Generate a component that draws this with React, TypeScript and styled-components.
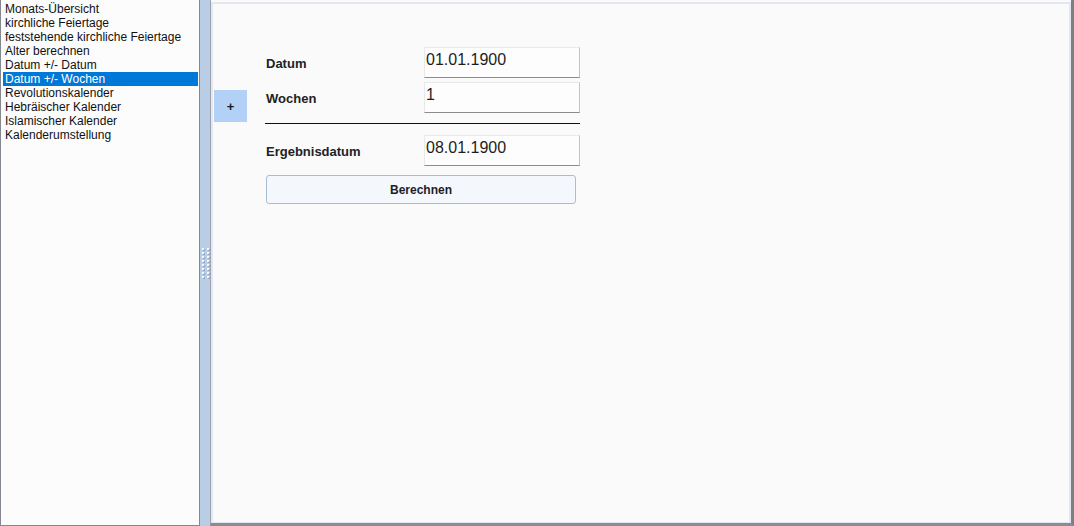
import React, { useState } from 'react';
import styled, { createGlobalStyle } from 'styled-components';

const menuItems = [
  'Monats-Übersicht',
  'kirchliche Feiertage',
  'feststehende kirchliche Feiertage',
  'Alter berechnen',
  'Datum +/- Datum',
  'Datum +/- Wochen',
  'Revolutionskalender',
  'Hebräischer Kalender',
  'Islamischer Kalender',
  'Kalenderumstellung',
];

const GlobalStyle = createGlobalStyle`
  html, body {
    margin: 0;
    padding: 0;
    background: #fafafa;
  }
  body {
    font-family: 'Liberation Sans', Arial, sans-serif;
  }
`;

const Shell = styled.div`
  display: flex;
  width: 1074px;
  height: 526px;
  box-sizing: border-box;
`;

const Sidebar = styled.ul`
  width: 200px;
  flex: 0 0 200px;
  margin: 0;
  padding: 2px 1px 0 2px;
  box-sizing: border-box;
  list-style: none;
  background: #fcfcfc;
  border-left: 1px solid #828790;
  border-right: 1px solid #828790;
  border-bottom: 1px solid #828790;
`;

const MenuItem = styled.li<{ $active?: boolean }>`
  height: 14px;
  line-height: 14px;
  padding-left: 2px;
  font-size: 12px;
  color: ${(p) => (p.$active ? '#ffffff' : '#111111')};
  background: ${(p) => (p.$active ? '#0078d7' : 'transparent')};
  white-space: nowrap;
  cursor: default;
`;

const Splitter = styled.div`
  flex: 0 0 10px;
  display: flex;
  align-items: center;
  justify-content: center;
  background: #b9cde4;
`;

const Grip = styled.div`
  display: grid;
  grid-template-columns: repeat(2, 2px);
  grid-auto-rows: 2px;
  column-gap: 3px;
  row-gap: 2px;

  span {
    background: #f4f7fb;
    box-shadow: 1px 1px 0 #8fa6c4;
  }
`;

const Workspace = styled.main`
  flex: 1;
  display: flex;
  box-sizing: border-box;
  border-left: 1px solid #9ea3ab;
  border-right: 3px solid #7d7f84;
  border-bottom: 3px solid #8a8c92;
  padding-top: 2px;
  background: #fafafa;
`;

const Inner = styled.div`
  flex: 1;
  display: flex;
  align-items: flex-start;
  border: 2px solid #e3e7f3;
  border-bottom-width: 1px;
  background: #fafafa;
`;

const ToggleButton = styled.button`
  margin-top: 86px;
  margin-left: 1px;
  width: 33px;
  height: 32px;
  padding: 0;
  border: none;
  background: #b3d1f7;
  color: #1a1a1a;
  font-family: 'Liberation Sans', Arial, sans-serif;
  font-size: 13px;
  font-weight: bold;
  cursor: pointer;
`;

const Form = styled.div`
  margin-top: 43px;
  margin-left: 19px;
  width: 314px;
  display: grid;
  grid-template-columns: 158px 156px;
  row-gap: 4px;
  align-items: center;
`;

const Label = styled.label`
  font-size: 13px;
  font-weight: bold;
  color: #222222;
  padding-top: 1px;
`;

const Field = styled.input`
  box-sizing: border-box;
  width: 156px;
  height: 31px;
  padding: 3px 1px 8px;
  font-family: 'Liberation Sans', Arial, sans-serif;
  font-size: 16px;
  line-height: 18px;
  color: #1e1e1e;
  background: #fdfdfd;
  border-top: 1px solid #e9e9e9;
  border-left: 1px solid #e9e9e9;
  border-right: 1px solid #c4c4c4;
  border-bottom: 1px solid #8c8c8c;
  outline: none;
  align-self: start;
`;

const Divider = styled.hr`
  grid-column: 1 / -1;
  margin: 6px 0 7px -1px;
  border: none;
  border-top: 1px solid #111111;
  width: 315px;
`;

const SubmitButton = styled.button`
  grid-column: 1 / -1;
  margin-top: 5px;
  width: 310px;
  height: 29px;
  border: 1px solid #a7bcd6;
  border-radius: 3px;
  background: #f4f7fb;
  font-family: 'Liberation Sans', Arial, sans-serif;
  font-size: 12px;
  font-weight: bold;
  color: #1e1e2a;
  cursor: pointer;
`;

const App = () => {
  const [selected, setSelected] = useState(5);
  const [date, setDate] = useState('01.01.1900');
  const [weeks, setWeeks] = useState('1');
  const [result, setResult] = useState('08.01.1900');

  const calculate = () => {
    const [d, m, y] = date.split('.').map(Number);
    const start = new Date(y, m - 1, d);
    start.setDate(start.getDate() + 7 * (Number(weeks) || 0));
    const pad = (n: number) => String(n).padStart(2, '0');
    setResult(`${pad(start.getDate())}.${pad(start.getMonth() + 1)}.${start.getFullYear()}`);
  };

  return (
    <Shell>
      <GlobalStyle />
      <Sidebar>
        {menuItems.map((item, i) => (
          <MenuItem key={item} $active={i === selected} onClick={() => setSelected(i)}>
            {item}
          </MenuItem>
        ))}
      </Sidebar>
      <Splitter>
        <Grip>
          {Array.from({ length: 16 }).map((_, i) => (
            <span key={i} />
          ))}
        </Grip>
      </Splitter>
      <Workspace>
        <Inner>
          <ToggleButton>+</ToggleButton>
          <Form>
            <Label>Datum</Label>
            <Field value={date} onChange={(e) => setDate(e.target.value)} />
            <Label>Wochen</Label>
            <Field value={weeks} onChange={(e) => setWeeks(e.target.value)} />
            <Divider />
            <Label>Ergebnisdatum</Label>
            <Field value={result} readOnly />
            <SubmitButton onClick={calculate}>Berechnen</SubmitButton>
          </Form>
        </Inner>
      </Workspace>
    </Shell>
  );
};

export default App;
